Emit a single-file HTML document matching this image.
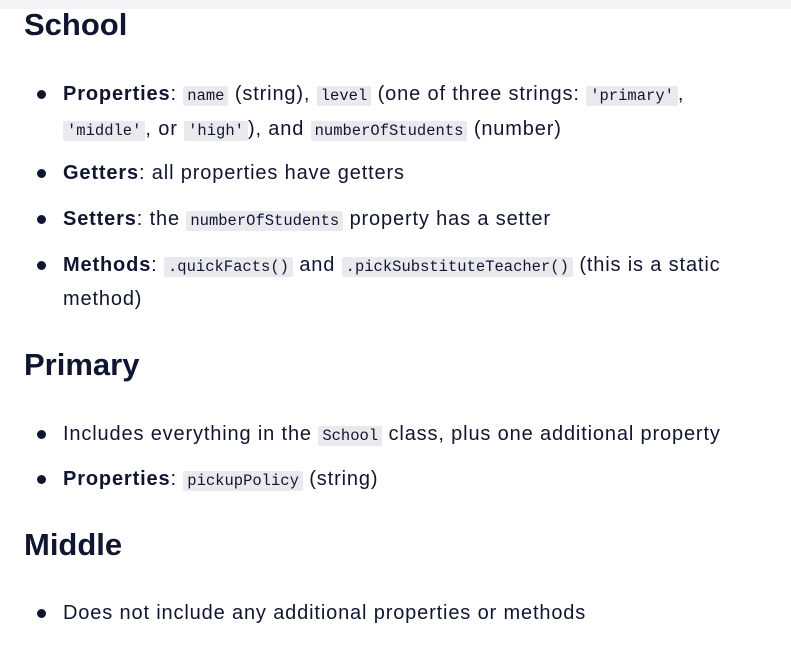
<!DOCTYPE html>
<html><head><style>
body{margin:0;width:791px;height:650px;background:#fff;font-family:"Liberation Sans",sans-serif;color:#10162f;position:relative;overflow:hidden}
.top{position:absolute;left:0;top:0;width:791px;height:9px;background:#f3f3f5}
h2{position:absolute;left:24px;margin:0;font-size:31px;font-weight:bold;line-height:36px}
.l{position:absolute;left:63px;font-size:20px;line-height:24px;white-space:nowrap;letter-spacing:0.85px}
.b{position:absolute;left:37px;width:9px;height:9px;border-radius:50%;background:#10162f}
code{font-family:"Liberation Mono",monospace;font-size:15.5px;letter-spacing:0;background:#eaeaee;padding:1px 4px;border-radius:2px}
</style></head><body>
<div class="top"></div>
<h2 style="top:7px">School</h2>
<div class="b" style="top:90px"></div>
<div class="l" style="top:82px"><b>Properties</b>: <code>name</code> (string), <code>level</code> (one of three strings: <code>'primary'</code>,</div>
<div class="l" style="top:117px"><code>'middle'</code>, or <code>'high'</code>), and <code>numberOfStudents</code> (number)</div>
<div class="b" style="top:169px"></div>
<div class="l" style="top:161px"><b>Getters</b>: all properties have getters</div>
<div class="b" style="top:215px"></div>
<div class="l" style="top:207px"><b>Setters</b>: the <code>numberOfStudents</code> property has a setter</div>
<div class="b" style="top:261px"></div>
<div class="l" style="top:253px"><b>Methods</b>: <code>.quickFacts()</code> and <code>.pickSubstituteTeacher()</code> (this is a static</div>
<div class="l" style="top:287px">method)</div>
<h2 style="top:347px">Primary</h2>
<div class="b" style="top:430px"></div>
<div class="l" style="top:422px">Includes everything in the <code>School</code> class, plus one additional property</div>
<div class="b" style="top:475px"></div>
<div class="l" style="top:467px"><b>Properties</b>: <code>pickupPolicy</code> (string)</div>
<h2 style="top:527px">Middle</h2>
<div class="b" style="top:609px"></div>
<div class="l" style="top:601px">Does not include any additional properties or methods</div>
</body></html>
